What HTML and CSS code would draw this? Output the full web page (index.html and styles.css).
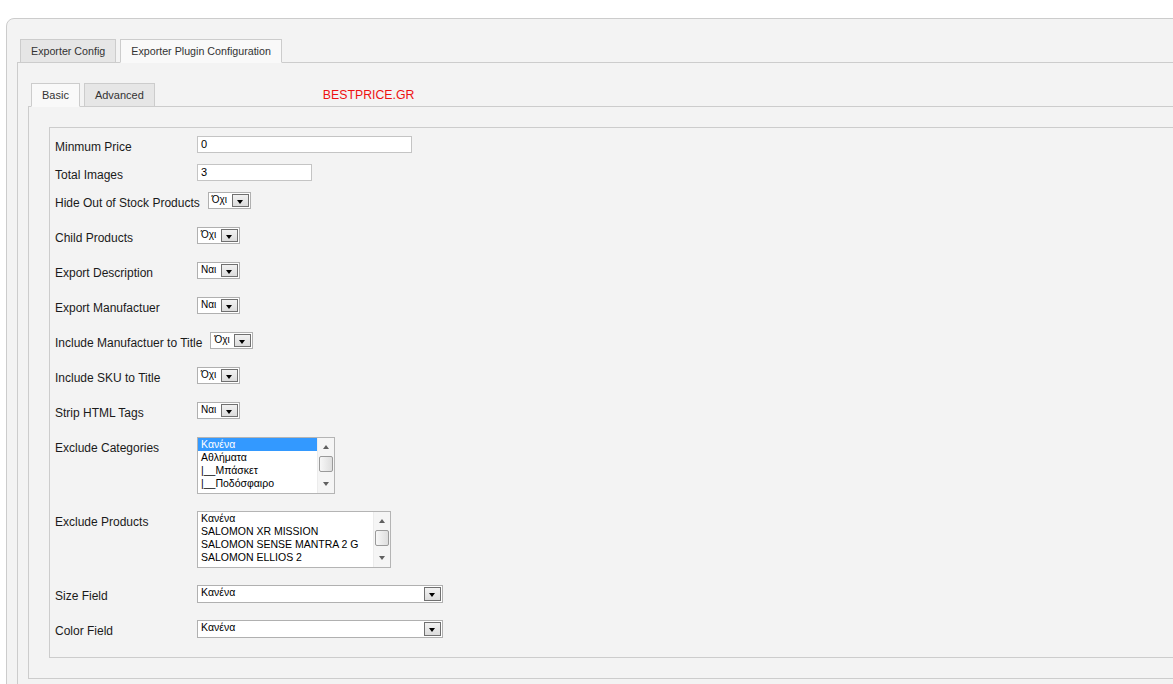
FILE: index.html
```html
<!DOCTYPE html>
<html lang="el">
<head>
  <meta charset="UTF-8">
  <meta name="viewport" content="width=device-width, initial-scale=1.0">
  <title>Exporter Plugin Configuration</title>
  <link rel="stylesheet" href="styles.css">
</head>
<body>
  <div class="panel">
    <ul class="tabs">
      <li class="tab">Exporter Config</li>
      <li class="tab active">Exporter Plugin Configuration</li>
    </ul>

    <div class="tab-body">
      <div class="subtab-bar">
        <ul class="tabs subtabs">
          <li class="tab active">Basic</li>
          <li class="tab">Advanced</li>
        </ul>
        <span class="brand">BESTPRICE.GR</span>
      </div>

      <div class="subtab-body">
        <div class="fieldset">
          <div class="row text-row">
            <label>Minmum Price</label>
            <div class="input wide">0</div>
          </div>
          <div class="row text-row">
            <label>Total Images</label>
            <div class="input short">3</div>
          </div>
          <div class="row">
            <label>Hide Out of Stock Products</label>
            <div class="select small"><span class="value">Όχι</span><span class="arrow"></span></div>
          </div>
          <div class="row">
            <label>Child Products</label>
            <div class="select small"><span class="value">Όχι</span><span class="arrow"></span></div>
          </div>
          <div class="row">
            <label>Export Description</label>
            <div class="select small"><span class="value">Ναι</span><span class="arrow"></span></div>
          </div>
          <div class="row">
            <label>Export Manufactuer</label>
            <div class="select small"><span class="value">Ναι</span><span class="arrow"></span></div>
          </div>
          <div class="row">
            <label>Include Manufactuer to Title</label>
            <div class="select small"><span class="value">Όχι</span><span class="arrow"></span></div>
          </div>
          <div class="row">
            <label>Include SKU to Title</label>
            <div class="select small"><span class="value">Όχι</span><span class="arrow"></span></div>
          </div>
          <div class="row">
            <label>Strip HTML Tags</label>
            <div class="select small"><span class="value">Ναι</span><span class="arrow"></span></div>
          </div>

          <div class="row list-row">
            <label>Exclude Categories</label>
            <div class="listbox categories">
              <ul class="options">
                <li class="selected">Κανένα</li>
                <li>Αθλήματα</li>
                <li>|__Μπάσκετ</li>
                <li>|__Ποδόσφαιρο</li>
              </ul>
              <div class="scrollbar">
                <span class="up"></span>
                <span class="thumb"></span>
                <span class="down"></span>
              </div>
            </div>
          </div>
          <div class="row list-row">
            <label>Exclude Products</label>
            <div class="listbox products">
              <ul class="options">
                <li>Κανένα</li>
                <li>SALOMON XR MISSION</li>
                <li>SALOMON SENSE MANTRA 2 G</li>
                <li>SALOMON ELLIOS 2</li>
              </ul>
              <div class="scrollbar">
                <span class="up"></span>
                <span class="thumb"></span>
                <span class="down"></span>
              </div>
            </div>
          </div>
          <div class="row list-row">
            <label>Size Field</label>
            <div class="select large"><span class="value">Κανένα</span><span class="arrow"></span></div>
          </div>
          <div class="row list-row">
            <label>Color Field</label>
            <div class="select large"><span class="value">Κανένα</span><span class="arrow"></span></div>
          </div>
        </div>
      </div>
    </div>
  </div>
</body>
</html>
```

FILE: styles.css
```css
html,
body {
  overflow: hidden;
}

body {
  margin: 0;
  padding: 0;
  font-family: "Liberation Sans", Arial, sans-serif;
  background-color: #ffffff;
  color: #222222;
}

.panel {
  margin: 18px -40px 0 6px;
  padding: 20px 0 0 10px;
  background-color: #f3f3f3;
  border: 1px solid #cccccc;
  border-radius: 8px 0 0 0;
}

/* tabs */

.tabs {
  display: flex;
  list-style: none;
  margin: 0 0 -1px 3px;
  padding: 0;
}

.tab {
  position: relative;
  height: 22px;
  line-height: 22px;
  padding: 0 10px;
  margin-right: 4px;
  font-size: 10.7px;
  color: #333333;
  background-color: #e6e6e6;
  border: 1px solid #cccccc;
}

.tab.active {
  background-color: #f9f9f9;
  border-bottom-color: #f9f9f9;
}

.subtabs .tab {
  font-size: 11px;
}

.tab-body {
  padding: 20px 0 10px 10px;
  border: 1px solid #cccccc;
  border-right: none;
  background-color: #f3f3f3;
}

.subtab-bar {
  display: flex;
  align-items: center;
}

.brand {
  margin-left: 164px;
  font-size: 12.3px;
  color: #ee1111;
}

.subtab-body {
  padding: 20px 0 20px 20px;
  border: 1px solid #cccccc;
  border-right: none;
}

.fieldset {
  padding: 8px 5px 19px 5px;
  border: 1px solid #cccccc;
  border-right: none;
}

/* form rows */

.row {
  display: flex;
  align-items: flex-start;
  margin-bottom: 18px;
}

.row.text-row {
  margin-bottom: 11px;
}

.row.list-row {
  margin-bottom: 17px;
}

.row:last-child {
  margin-bottom: 0;
}

label {
  min-width: 134px;
  margin-right: 8px;
  padding-top: 5px;
  font-size: 12px;
  line-height: 12px;
  color: #1a1a1a;
}

.input {
  box-sizing: border-box;
  height: 17px;
  padding: 1px 3px;
  font-size: 11px;
  line-height: 13px;
  color: #000000;
  background-color: #ffffff;
  border: 1px solid #c4c4c4;
}

.input.wide {
  width: 215px;
}

.input.short {
  width: 115px;
}

.select {
  box-sizing: border-box;
  display: flex;
  justify-content: space-between;
  height: 17px;
  padding: 1px 1px 1px 3px;
  background-color: #ffffff;
  border: 1px solid #b0b0b0;
}

.select.small {
  width: 43px;
}

.select.large {
  width: 246px;
  height: 18px;
}

.select .value {
  font-size: 10px;
  line-height: 11px;
  color: #000000;
}

.select.large .value {
  font-size: 10.5px;
}

.select .arrow {
  box-sizing: border-box;
  position: relative;
  width: 17px;
  height: 13px;
  border: 1px solid #707070;
  background: linear-gradient(#f2f2f2, #dcdcdc);
}

.select.large .arrow {
  height: 14px;
}

.select .arrow::after {
  content: "";
  position: absolute;
  left: 4px;
  top: 5px;
  border-left: 3.5px solid transparent;
  border-right: 3.5px solid transparent;
  border-top: 4px solid #000000;
}

/* list boxes */

.listbox {
  box-sizing: border-box;
  display: flex;
  height: 57px;
  background-color: #ffffff;
  border: 1px solid #b4b4b4;
}

.listbox.categories {
  width: 138px;
}

.listbox.products {
  width: 194px;
}

.options {
  flex: 1;
  list-style: none;
  margin: 0;
  padding: 0;
}

.options li {
  padding-left: 3px;
  font-size: 10.5px;
  line-height: 13px;
  color: #000000;
  white-space: nowrap;
}

.options li.selected {
  background-color: #3399ff;
  color: #ffffff;
}

.scrollbar {
  position: relative;
  width: 16px;
  background-color: #f5f5f5;
  border-left: 1px solid #ececec;
}

.scrollbar .up,
.scrollbar .down {
  position: absolute;
  left: 5px;
  border-left: 3.5px solid transparent;
  border-right: 3.5px solid transparent;
}

.scrollbar .up {
  top: 7px;
  border-bottom: 4px solid #606060;
}

.scrollbar .down {
  bottom: 7px;
  border-top: 4px solid #606060;
}

.scrollbar .thumb {
  position: absolute;
  left: 1px;
  top: 18px;
  box-sizing: border-box;
  width: 14px;
  height: 16px;
  border: 1px solid #9a9a9a;
  border-radius: 2px;
  background: linear-gradient(to right, #f7f7f7, #dedede);
}
```
